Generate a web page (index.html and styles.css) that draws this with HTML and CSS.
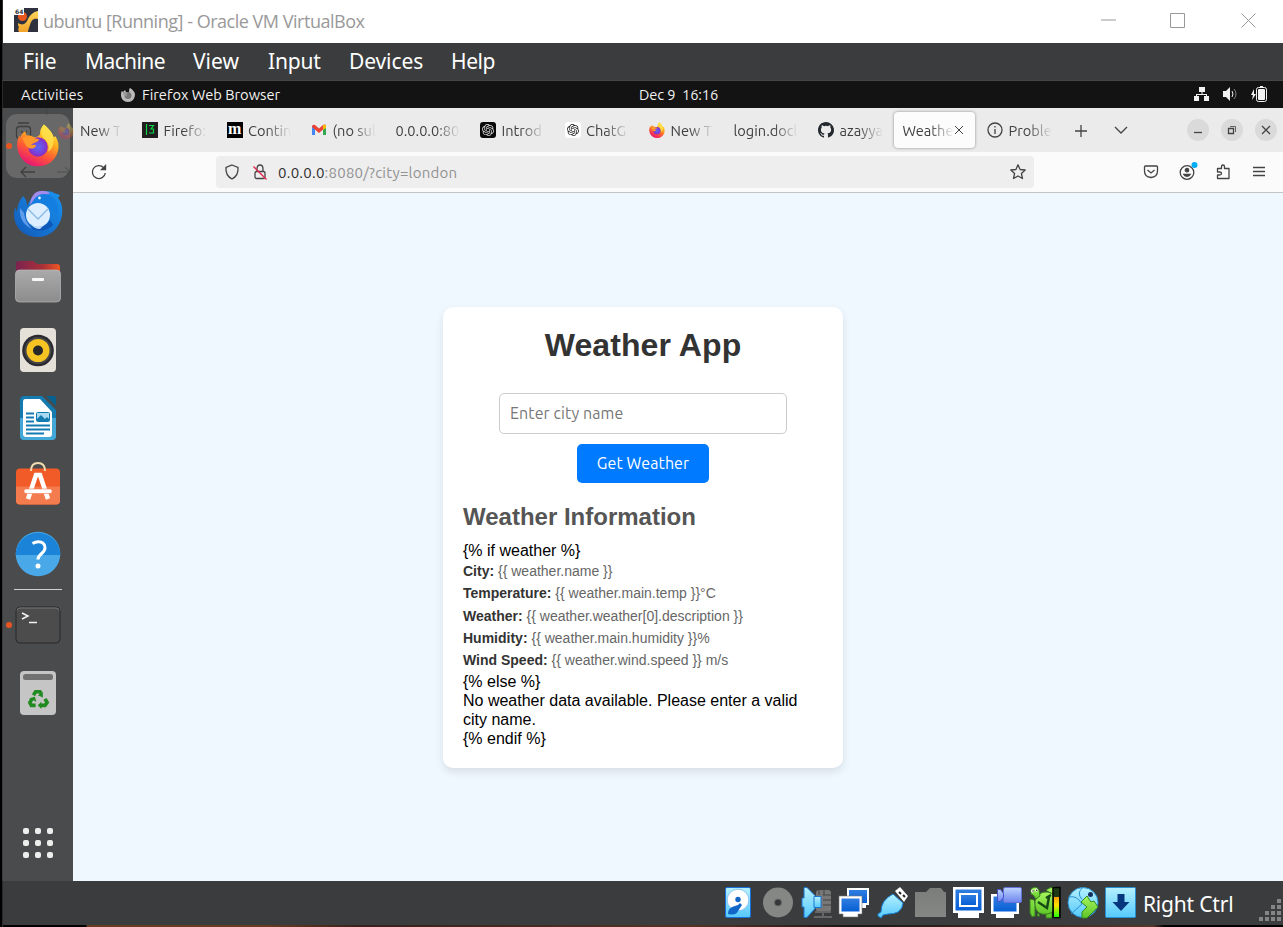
FILE: index.html
```html
<!DOCTYPE html>
<html lang="en">
<head>
<meta charset="utf-8">
<title>ubuntu [Running] - Oracle VM VirtualBox</title>
<link rel="stylesheet" href="styles.css">
</head>
<body>
<svg class="defs" width="0" height="0" aria-hidden="true">
  <defs>
    <linearGradient id="fox" x1="0.8" y1="0" x2="0.3" y2="1"><stop offset="0" stop-color="#fff44f"/><stop offset=".35" stop-color="#ffb01e"/><stop offset=".65" stop-color="#ff5a34"/><stop offset="1" stop-color="#e5107a"/></linearGradient>
    <radialGradient id="globe"><stop offset="0" stop-color="#5b6cf5"/><stop offset=".6" stop-color="#7546dd"/><stop offset="1" stop-color="#8c2bc0"/></radialGradient>
    <linearGradient id="bird" x1="1" y1="0" x2="0" y2="1"><stop offset="0" stop-color="#1a93f0"/><stop offset="1" stop-color="#1259b8"/></linearGradient>
    <linearGradient id="folder" x1="0" x2="1"><stop offset="0" stop-color="#7c2350"/><stop offset=".6" stop-color="#a83038"/><stop offset="1" stop-color="#ee5522"/></linearGradient>
    <linearGradient id="grey" x1="0" y1="0" x2="0" y2="1"><stop offset="0" stop-color="#aaa"/><stop offset="1" stop-color="#8c8c8c"/></linearGradient>
    <linearGradient id="cyan" x1="0" y1="0" x2="0" y2="1"><stop offset="0" stop-color="#b5f0ff"/><stop offset="1" stop-color="#55c9fb"/></linearGradient>
    <linearGradient id="blue" x1="0" y1="0" x2="0" y2="1"><stop offset="0" stop-color="#2f7de0"/><stop offset="1" stop-color="#075fd5"/></linearGradient>
    <linearGradient id="lilac" x1="0" y1="0" x2="0" y2="1"><stop offset="0" stop-color="#bcd4ff"/><stop offset="1" stop-color="#6d84ee"/></linearGradient>
    <linearGradient id="dim" x1="0" y1="0" x2="0" y2="1"><stop offset="0" stop-color="#7b7d7b"/><stop offset="1" stop-color="#858785"/></linearGradient>
    <linearGradient id="green" x1="0" y1="0" x2="0" y2="1"><stop offset="0" stop-color="#a5f75c"/><stop offset="1" stop-color="#5fc428"/></linearGradient>
    <linearGradient id="gold" x1="0" y1="0" x2="0" y2="1"><stop offset="0" stop-color="#ffd45a"/><stop offset="1" stop-color="#f3a32a"/></linearGradient>
    <linearGradient id="load" x1="0" y1="0" x2="0" y2="1"><stop offset="0" stop-color="#ff9d00"/><stop offset=".4" stop-color="#ffe000"/><stop offset="1" stop-color="#22ff00"/></linearGradient>
    <symbol id="firefox" viewBox="0 0 44 44">
      <path d="M28 1c6 5 9 9 10 13l2-1c3 5 3.600 10 2.500 15C40 38 32 44 22 44S3 37 1 26C0 21 1 16 3 12l1 3c0-3 3-6 5-7l1 4c4 0 6 1 8 2 3 0 5-1 6-3 0-4 1-7 4-10z" fill="url(#fox)"/>
      <circle cx="22" cy="24" r="10" fill="url(#globe)"/>
      <path d="M6 15c6-3 11 0 17 1-1 4-6 3-8 6 3 0 4-1 5 1-3 4-7 3-10 0-2-3-2-5-4-8z" fill="#ff982d"/>
      <path d="M28 1c-4 6-3 11 1 15s5 8 3 13c5-3 6-7 6-15-2-5-5-9-10-13z" fill="#ffe04b" opacity=".85"/>
    </symbol>
    <symbol id="knot" viewBox="0 0 24 24">
      <path fill="currentColor" d="M22.2819 9.8211a5.9847 5.9847 0 0 0-.5157-4.9108 6.0462 6.0462 0 0 0-6.5098-2.9A6.0651 6.0651 0 0 0 4.9807 4.1818a5.9847 5.9847 0 0 0-3.9977 2.9 6.0462 6.0462 0 0 0 .7427 7.0966 5.98 5.98 0 0 0 .511 4.9107 6.051 6.051 0 0 0 6.5146 2.9001A5.9847 5.9847 0 0 0 13.2599 24a6.0557 6.0557 0 0 0 5.7718-4.2058 5.9894 5.9894 0 0 0 3.9977-2.9001 6.0557 6.0557 0 0 0-.7475-7.0729zm-9.022 12.6081a4.4755 4.4755 0 0 1-2.8764-1.0408l.1419-.0804 4.7783-2.7582a.7948.7948 0 0 0 .3927-.6813v-6.7369l2.02 1.1686a.071.071 0 0 1 .038.052v5.5826a4.504 4.504 0 0 1-4.4945 4.4944zm-9.6607-4.1254a4.4708 4.4708 0 0 1-.5346-3.0137l.142.0852 4.783 2.7582a.7712.7712 0 0 0 .7806 0l5.8428-3.3685v2.3324a.0804.0804 0 0 1-.0332.0615L9.74 19.9502a4.4992 4.4992 0 0 1-6.1408-1.6464zM2.3408 7.8956a4.485 4.485 0 0 1 2.3655-1.9728V11.6a.7664.7664 0 0 0 .3879.6765l5.8144 3.3543-2.0201 1.1685a.0757.0757 0 0 1-.071 0l-4.8303-2.7865A4.504 4.504 0 0 1 2.3408 7.872zm16.5963 3.8558L13.1038 8.364 15.1192 7.2a.0757.0757 0 0 1 .071 0l4.8303 2.7913a4.4944 4.4944 0 0 1-.6765 8.1042v-5.6772a.79.79 0 0 0-.407-.667zm2.0107-3.0231l-.142-.0852-4.7735-2.7818a.7759.7759 0 0 0-.7854 0L9.409 9.2297V6.8974a.0662.0662 0 0 1 .0284-.0615l4.8303-2.7866a4.4992 4.4992 0 0 1 6.6802 4.66zM8.3065 12.863l-2.02-1.1638a.0804.0804 0 0 1-.038-.0567V6.0742a4.4992 4.4992 0 0 1 7.3757-3.4537l-.142.0805L8.704 5.459a.7948.7948 0 0 0-.3927.6813zm1.0976-2.3654l2.602-1.4998 2.6069 1.4998v2.9994l-2.5974 1.4997-2.6067-1.4997Z"/>
    </symbol>
  </defs>
</svg>
<div class="vm">
  <header class="titlebar">
    <svg class="vm-logo" viewBox="0 0 24 24">
      <path fill="#30333f" d="M0 0h24v24H0z"/><circle cx="8.500" cy="8.500" r="4.500" fill="#e9571c"/>
      <path d="M24 3v8c-5-1-7 2-8 6-1 3-2 5-2 7H5c-1-2-1-3 0-5-1-1-1-2-1-4 5 3 8 1 10-4 2-4 5-7 10-8z" fill="url(#gold)"/>
      <path fill="#fff" d="M0 0h10v7H0z"/><text x="1" y="5.800" class="tiny">64</text>
    </svg>
    <span class="window-title">ubuntu [Running] - Oracle VM VirtualBox</span>
    <svg class="window-buttons" viewBox="0 0 160 20"><path d="M0 10h15M140.500 3.500l14 14M154.500 3.500l-14 14" /><path d="M69.500 3.500h14v14h-14z"/></svg>
  </header>
  <nav class="menubar">
    <span class="m-file">File</span><span class="m-machine">Machine</span><span class="m-view">View</span><span class="m-input">Input</span><span class="m-devices">Devices</span><span class="m-help">Help</span>
  </nav>
  <div class="topbar">
    <span class="activities">Activities</span>
    <svg class="mini-fox" viewBox="0 0 16 16"><path d="M10 1c3 2 4 3 5 6 0 5-3 8-7 8s-7-3-7-7c0-2 0-3 1-4l1 1 2-2 1 2 2 1 1-1c0-2 0-3 1-4z" fill="#bbb"/><circle cx="8" cy="8.500" r="3.500" fill="#777"/><path d="M3 5c2 0 3 0 5 1-2 1-2 2-1 3-2 1-4-1-4-4z" fill="#999"/></svg>
    <span class="app-name">Firefox Web Browser</span>
    <span class="clock">Dec 9&nbsp; 16:16</span>
    <svg class="sys" viewBox="0 0 74 18">
      <g fill="#f2f2f2"><path d="M5 2h6v5H5zM0 11h5v5H0zM10 11h5v5h-5z"/><path d="M7.500 6h1v3H13v3h-1v-2H3v2H2V9h5.500zM29 6h3l4-4v14l-4-4h-3z"/><path d="M60 4l-3 6h2l-1 5 4-6h-2z"/><rect x="64" y="4" width="7" height="11" rx="1"/></g>
      <g fill="none" stroke="#f2f2f2"><rect x="62.500" y="2.500" width="10" height="14" rx="2"/><path d="M66 1.500h3M38 6q2 3 0 6"/><path d="M40 4q4 5 0 10" opacity=".5"/></g>
    </svg>
  </div>
  <div class="desktop">
    <aside class="dock">
      <div class="tile active running">
        <svg class="ghost" viewBox="0 0 70 84"><g fill="none" stroke="#3f3f3f" stroke-width="1.300"><rect x="13.500" y="18.500" width="14" height="12" rx="3"/><path d="M15 15h11M18 23l3 3 3-3M32 64H18m5-5-5 5 5 5"/><path d="M54 64h13m-5-5 5 5-5 5" opacity=".4"/><path d="M43.500 0v7" opacity=".4"/></g><use href="#firefox" x="55" y="15" width="16" height="16" opacity=".3"/></svg>
        <svg class="app"><use href="#firefox" x="2.500" y="1.500" width="43" height="43"/></svg>
      </div>
      <div class="tile"><svg class="app" viewBox="0 0 48 48">
        <path d="M9 6c3 3 4 6 4 10 3-7 7-12 13-14 5-2 12-1 14 1l6 2-2 3c4 5 5 11 4 17-2 12-11 22-24 22C9 47 0 37 0 24l1-7 2 5c0-6 2-11 6-16z" fill="url(#bird)"/>
        <path d="M21 3c-3 3-5 7-5 12l6-7c4-3 10-2 14-5-5-3-10-3-15 0z" fill="#a08bea"/>
        <path d="M21 8c-3 4-5 8-5 13l18-6 9 10c3-8-1-17-8-20-5-2-10-1-14 3z" fill="#137ee0"/>
        <path d="M12 34c5 6 19 5 24-4l3 5c-6 7-20 8-27-1z" fill="#0e57b8"/>
        <ellipse cx="24" cy="25" rx="12" ry="12" fill="#dceeff"/><path d="M14 19l10 10 10-10" fill="none" stroke="#86b9e6" stroke-width="1.300"/><path d="M17 34q5 4 12 2l-3 3q-6 0-9-5z" fill="#c0dcfa"/><path d="M6 18c-1 9 3 17 12 21-5-5-7-10-8-16z" fill="#5f9cec"/><circle cx="25.500" cy="8" r="1.400" fill="#d9f6ff"/>
      </svg></div>
      <div class="tile"><svg class="app" viewBox="0 0 48 48"><path d="M2 13V6q0-3 3-3h14l4 3h20q3 0 3 3v10H2z" fill="url(#folder)"/><rect x="1.500" y="12" width="45" height="32" rx="4" fill="url(#grey)" stroke="#b9b9b9" stroke-width=".7"/><rect x="18" y="20" width="12" height="3" rx="1" fill="#f7f7f7"/></svg></div>
      <div class="tile"><svg class="app" viewBox="0 0 48 48"><rect x="6" y="2" width="36" height="44" rx="4" fill="#e5e0d8"/><circle cx="24" cy="24.500" r="15.800" fill="#29292f"/><circle cx="24" cy="24.500" r="13.500" fill="#464648"/><circle cx="24" cy="24.500" r="11.500" fill="#f5c422"/><circle cx="24" cy="24.500" r="5" fill="#28282b"/></svg></div>
      <div class="tile"><svg class="app" viewBox="0 0 48 48"><path d="M10 2h18l14 14v26q0 4-4 4H10q-4 0-4-4V6q0-4 4-4z" fill="#147bb1"/><path d="M6 24h36v18q0 4-4 4H10q-4 0-4-4z" fill="#42a8d8"/><path d="M11 5h15l12 13v22q0 3-3 3H12q-3 0-3-3V8q0-3 2-3z" fill="#fff"/><path d="M32 2h8q2 0 2 2v8z" fill="#07618e"/><path d="M12 19.500h8M12 23.500h8M12 27.500h8M12 31.500h24M12 35.500h24M12 39.500h18" stroke="#147bb1" stroke-width="2"/><rect x="22.500" y="18.500" width="13" height="9" rx="1" fill="#aadaf3" stroke="#147bb1"/><path d="M23 27v-2l4-4 4 4 2-2 2 2v2z" fill="#147bb1"/></svg></div>
      <div class="tile"><svg class="app" viewBox="0 0 48 48"><rect x="2" y="6.500" width="44" height="36" rx="4" fill="#f15b27"/><path d="M2 24.500h44v14q0 4-4 4H6q-4 0-4-4z" fill="#f47b4d"/><path d="M17 9q0-8 7-8t7 8" fill="none" stroke="#efdcae" stroke-width="2"/><path d="M14 37l8-24h4l8 24" fill="none" stroke="#fff" stroke-width="4.500"/><rect x="10" y="27" width="28" height="4.500" rx="2" fill="#fff" stroke="#f47b4d" stroke-width=".6"/></svg></div>
      <div class="tile"><svg class="app" viewBox="0 0 48 48"><circle cx="24" cy="24" r="22.300" fill="#49a9e8"/><path d="M1.700 25a22.300 22.300 0 0 1 44.600 0z" fill="#1b84d9"/><path d="M18.500 13.500c6-3.500 12.500-1.500 12.500 4.500 0 5.500-7 5.500-7 11.500" fill="none" stroke="#fff" stroke-width="3"/><circle cx="24" cy="36" r="2.500" fill="#fff"/></svg></div>
      <hr>
      <div class="tile running"><svg class="app" viewBox="0 0 48 48"><rect x="2" y="6" width="44" height="36" rx="4" fill="#4c4c4c" stroke="#292929"/><path d="M3 9.500q0-2.500 3-2.500h36q3 0 3 2.500" fill="none" stroke="#777"/><path d="M8 12l6 3-6 3M15 21.500h8" fill="none" stroke="#f4f4f4" stroke-width="1.500"/></svg></div>
      <div class="tile"><svg class="app" viewBox="0 0 48 48"><rect x="6" y="2" width="36" height="44" rx="4" fill="#c5c5c5"/><rect x="9" y="5" width="30" height="6" rx="2.500" fill="#717171"/><g transform="translate(6.500 9) scale(.72)"><g fill="none" stroke="#218a21" stroke-width="5"><path d="M18 24l3-5h6l2 3M34 29l3 5-3 4h-6M21 38h-6l-2-4 3-5"/></g><path d="M31 27l-7-3 7-4zM29 33v10l-5-5zM12 28l8-2 2 7z" fill="#218a21"/></g></svg></div>
      <div class="apps-grid"><i></i><i></i><i></i><i></i><i></i><i></i><i></i><i></i><i></i></div>
    </aside>
    <section class="browser">
      <div class="tabs">
        <div class="tab first"><span>New T</span></div>
        <div class="tab"><svg viewBox="0 0 16 16"><path fill="#211d20" d="M0 0h16v16H0z"/><path d="M4.500 2v11M7 3.500h4.500L9 7h2.500v4H7" fill="none" stroke="#08d643" stroke-width="1.200"/></svg><span>Firefo:</span></div>
        <div class="tab"><svg viewBox="0 0 16 16"><path d="M0 0h16v16H0z"/><text x="1" y="12" class="m-logo">m</text></svg><span>Contin</span></div>
        <div class="tab"><svg viewBox="0 0 16 16"><path d="M1 13V4h3v9z" fill="#4285f4"/><path d="M12 13V4h3v9z" fill="#34a853"/><path d="M1 5l7 6 7-6V3q-1-1-3 0L8 6.500 4 3Q1 2 1 5z" fill="#ea4335"/><path d="M12 3q3-1 3 1v2l-3 2z" fill="#fbbc04"/></svg><span>(no sul</span></div>
        <div class="tab"><span>0.0.0.0:80</span></div>
        <div class="tab"><svg viewBox="0 0 16 16" color="#ddd"><rect width="16" height="16" rx="3" fill="#090909"/><use href="#knot" x="2" y="2" width="12" height="12"/></svg><span>Introd</span></div>
        <div class="tab"><svg viewBox="0 0 16 16" color="#222"><rect width="16" height="16" rx="3" fill="#fff"/><use href="#knot" x="2" y="2" width="12" height="12"/></svg><span>ChatG</span></div>
        <div class="tab"><svg><use href="#firefox" width="16" height="16"/></svg><span>New T</span></div>
        <div class="tab"><span>login.docl</span></div>
        <div class="tab"><svg viewBox="0 0 16 16"><path fill="#24292f" d="M8 0C3.580 0 0 3.580 0 8c0 3.540 2.290 6.530 5.470 7.590.4.070.55-.17.55-.38v-1.490c-2.230.48-2.700-.95-2.700-.95-.36-.92-.89-1.170-.89-1.170-.73-.5.050-.49.050-.49.81.060 1.230.83 1.230.83.72 1.230 1.880.87 2.340.67.070-.52.280-.87.510-1.070-1.780-.2-3.640-.89-3.640-3.950 0-.87.310-1.590.82-2.150-.08-.2-.36-1.020.08-2.120 0 0 .67-.21 2.200.82a7.600 7.600 0 0 1 4 0c1.530-1.040 2.200-.82 2.200-.82.44 1.100.16 1.920.08 2.120.51.56.82 1.270.82 2.150 0 3.070-1.870 3.750-3.650 3.950.29.25.54.73.54 1.480v2.190c0 .21.150.46.550.38A8 8 0 0 0 8 0z"/></svg><span>azayya</span></div>
        <div class="tab selected"><span>Weathe</span><svg class="close" viewBox="0 0 10 10"><path d="M1 1l8 8M9 1L1 9"/></svg></div>
        <div class="tab"><svg class="line" viewBox="0 0 16 16"><circle cx="8" cy="8" r="7"/><path d="M8 7v5M8 4v1.500"/></svg><span>Proble</span></div>
        <svg class="line plus" viewBox="0 0 12 12"><path d="M0 6h12M6 0v12"/></svg>
        <svg class="line chevron" viewBox="0 0 12 8"><path d="M0 1l6 6 6-6"/></svg>
        <div class="controls">
          <b><svg class="line" viewBox="0 0 22 22"><path d="M7 13.500h8"/></svg></b><b><svg class="line" viewBox="0 0 22 22"><path d="M7.500 9.500h5v5h-5z"/><path d="M9 7.500h5.500V13" stroke-width=".8"/></svg></b><b><svg class="line" viewBox="0 0 22 22"><path d="M7 7l8 8M15 7l-8 8"/></svg></b>
        </div>
      </div>
      <div class="toolbar">
        <svg class="line reload" viewBox="0 0 16 16"><path d="M14.300 9A6.500 6.500 0 1 1 12.500 3.500L14 5"/><path d="M14.500 1.500v4h-4z" fill="#444"/></svg>
        <div class="url">
          <svg class="line" viewBox="0 0 16 16"><path d="M8 1l6 2.500C14.500 9 12 13 8 15 4 13 1.500 9 2 3.500z"/></svg>
          <svg class="line lock" viewBox="0 0 16 16"><rect x="3" y="7.500" width="10" height="7" rx="1.500"/><path d="M5 7V5q0-4 3-4t3 4v2"/><path d="M1.500 2.500l13 13" stroke="#e22850"/></svg>
          <span class="address"><em>0.0.0.0</em>:8080/?city=london</span>
          <svg class="line star" viewBox="0 0 16 16"><path stroke-linejoin="round" d="M8 .8l2.100 4.700 5.100.5-3.800 3.500 1.100 5L8 12l-4.500 2.500 1.100-5L.8 6l5.100-.5z"/></svg>
        </div>
        <div class="tools">
          <svg class="line" viewBox="0 0 16 16"><path d="M2.500 2h11q1 0 1 1v4q0 6-6.500 6.500Q1.500 13 1.500 7V3q0-1 1-1zM4.500 6L8 9l3.500-3"/></svg>
          <svg class="line" viewBox="0 0 16 16"><circle cx="8" cy="8.500" r="6.800"/><circle cx="8" cy="6.200" r="1.700" fill="#444"/><path d="M4.700 10.300h6.600q-.8 2-3.300 2t-3.300-2z" fill="#444"/><circle cx="15.500" cy="1" r="3" fill="#00aef7" stroke="none"/></svg>
          <svg class="line" viewBox="0 0 16 16"><path stroke-linejoin="round" d="M2.500 14.500V11h2q2 0 2-1.500T4.500 8h-2V4.500h4V2.800Q6.500 1 8 1t1.500 1.800v1.700H14v10z"/></svg>
          <svg class="line" viewBox="0 0 16 16"><path d="M2 3.500h12M2 7.500h12M2 11.500h12"/></svg>
        </div>
      </div>
      <main class="page">
        <article class="card">
          <h1>Weather App</h1>
          <form><input type="text" placeholder="Enter city name"><button type="button">Get Weather</button></form>
          <h2>Weather Information</h2>
          <div>{% if weather %}</div>
          <p><strong>City:</strong> {{ weather.name }}</p>
          <p><strong>Temperature:</strong> {{ weather.main.temp }}°C</p>
          <p><strong>Weather:</strong> {{ weather.weather[0].description }}</p>
          <p><strong>Humidity:</strong> {{ weather.main.humidity }}%</p>
          <p class="last"><strong>Wind Speed:</strong> {{ weather.wind.speed }} m/s</p>
          <div>{% else %}</div>
          <div>No weather data available. Please enter a valid city name.</div>
          <div>{% endif %}</div>
        </article>
      </main>
    </section>
  </div>
  <footer class="statusbar">
    <svg viewBox="0 0 32 32"><rect x=".5" y=".5" width="25" height="30" rx="1.500" fill="url(#cyan)" stroke="#1870d8"/><circle cx="13" cy="13" r="10.800" fill="#fff" stroke="#5aa5ec" stroke-width=".6"/><path d="M3 27q0-5 4-7l6-2 2-2 2 2-4 6q-2 5-10 3z" fill="#1167c7"/><circle cx="13" cy="12.500" r="2.700" fill="#1167c7"/></svg>
    <svg viewBox="0 0 32 32"><circle cx="15" cy="15.500" r="15" fill="#858785"/><circle cx="15" cy="15.500" r="3.500" fill="#353637" stroke="#666"/></svg>
    <svg viewBox="0 0 32 32"><rect x="15" y="3" width="15" height="22" rx="3" fill="#777"/><path d="M14 25h16M22 26v4M13 30h18" stroke="#666" stroke-width="2"/><path d="M22 8h8M22 13h8M22 18h8M18 3v5M23 3v5" stroke="#444"/><path d="M3 .5h3l8 8v13l-8 9H3V20H1v-9h2z" fill="url(#cyan)" stroke="#1976d1"/><path d="M13 9.500h7v11h-7z" fill="url(#cyan)" stroke="#1976d1"/></svg>
    <svg viewBox="0 0 32 32"><path d="M8 1h22v17h-3v3H13v-3H8z" fill="#fff"/><path d="M10 3h18v13H10z" fill="url(#blue)"/><path d="M0 9h23v18h-4v3H4v-3H0z" fill="#fff" stroke="#777" stroke-width=".6"/><path d="M2.500 11.500h18v13h-18z" fill="url(#blue)"/></svg>
    <svg viewBox="0 0 32 32"><path d="M18 4l5-4 8 9-4 6z" fill="#fff"/><path d="M22 5l2 2M26 8l2 2" stroke="#222" stroke-width="2"/><path d="M16 7l10 9q0 5-5 9-4 2-10 2l-5 1-2 3-3-2v-2l3-2q0-12 12-18z" fill="url(#cyan)" stroke="#1780d7"/></svg>
    <svg viewBox="0 0 32 32"><path d="M0 5h11l4-4h11l3 4h2v25H0z" fill="url(#dim)"/></svg>
    <svg viewBox="0 0 32 32"><path d="M0 0h31v26h-5v5H5v-5H0z" fill="#fff"/><path d="M2.500 2.500h26v21h-26z" fill="url(#blue)"/><path d="M6 6h19v14H6z" fill="#fff"/><path d="M8 8h15v10H8z" fill="url(#blue)"/></svg>
    <svg viewBox="0 0 32 32"><path d="M0 7h28v20h-5v4H5v-4H0z" fill="#fff"/><path d="M2.500 9.500h23v15h-23z" fill="url(#blue)"/><rect x="12.500" y=".5" width="18" height="15" rx="1.500" fill="url(#lilac)" stroke="#6672d8"/><path d="M6.500 2.500h3l3 4v4l-3 4h-3z" fill="url(#lilac)" stroke="#4651c8"/></svg>
    <svg viewBox="0 0 32 32"><path d="M17 3q8-5 11-2l-2 7M5 13l-4-1v14l2 4 3-1V19M9 26l-1 3h3M17 26v5h6v-6" fill="url(#green)" stroke="#367d20"/><path d="M6 14q3-10 13-9 8 2 8 11t-8 11q-12 2-13-9z" fill="url(#green)" stroke="#367d20"/><path d="M2 2q5-4 8 1l1 6-4 3-3-4-2-1z" fill="url(#green)" stroke="#367d20"/><circle cx="3.500" cy="4" r="1.500" fill="#fff"/><circle cx="7.500" cy="3" r="1.500" fill="#fff"/><circle cx="4" cy="4" r=".7"/><circle cx="7.800" cy="3.300" r=".7"/><path d="M9 15l9 6 2-11M17 11l5-3" fill="none" stroke="#164c14" stroke-width="2.500"/><path d="M24 .5h7v30h-7z" fill="#1d3a16" stroke="#000" stroke-width="1.500"/><path d="M25 10h5v20h-5z" fill="url(#load)"/></svg>
    <svg viewBox="0 0 32 32"><circle cx="16" cy="15.500" r="15" fill="url(#cyan)" stroke="#2590d2"/><path d="M2 10q8-2 13 7L4 27M16 .5q-7 5-1 12" fill="none" stroke="#2590d2"/><circle cx="23.500" cy="7.500" r="2.500" fill="#16305e"/><path d="M14 15l6-6 4 6 3-1 4 6-11 11h-5v-6l5-5z" fill="url(#green)" stroke="#348c22"/></svg>
    <svg viewBox="0 0 32 32"><rect x=".5" y=".5" width="30" height="30" rx="1" fill="url(#cyan)" stroke="#268fd2"/><path d="M12.500 7h7v8h5l-8.500 9-8.500-9h5z" fill="#06377e"/></svg>
    <span class="host-key">Right Ctrl</span>
    <svg class="grip" viewBox="0 0 24 24"><path d="M19 0h4v4h-4zM13 6h4v4h-4zM19 6h4v4h-4zM7 12h4v4H7zM13 12h4v4h-4zM19 12h4v4h-4zM1 18h4v4H1zM7 18h4v4H7zM13 18h4v4h-4zM19 18h4v4h-4z" fill="#858585"/></svg>
  </footer>
  <div class="strip"></div>
</div>
</body>
</html>
```
FILE: styles.css
```css
* { box-sizing: border-box; }
body { margin: 0; background: #000; font-family: Ubuntu, "Noto Sans", sans-serif; }
svg { display: block; flex: none; overflow: visible; }
.defs { position: absolute; }
.vm { width: 1283px; height: 927px; display: flex; flex-direction: column; overflow: hidden; }
.vm > * { margin-left: 2px; border-left: 1px solid #2b2b2b; flex: none; }
.titlebar { height: 43px; background: #fff; display: flex; align-items: center; padding: 0 19px 3px 11px; color: #999; }
.vm-logo { width: 24px; height: 24px; }
.tiny { font: bold 6px "DejaVu Sans"; fill: #333; }
.window-title { font: 18px "Open Sans", sans-serif; margin-left: 5px; letter-spacing: -.48px; white-space: pre; padding-top: 2px; }
.window-buttons { width: 160px; height: 20px; margin-left: auto; margin-right: 3px; fill: none; stroke: #999; }
.menubar { height: 38px; background: #3b3c3e; border-bottom: 1px solid #454648; display: flex; align-items: center; padding: 0 0 1px 20px; color: #fff; font: 21px "Noto Sans", sans-serif; }
.menubar span { white-space: nowrap; }
.m-file { width: 62px; } .m-machine { width: 108px; letter-spacing: -.6px; } .m-view { width: 75px; } .m-input { width: 81px; letter-spacing: -.2px; } .m-devices { width: 102px; letter-spacing: -.1px; } .m-help { letter-spacing: -.4px; }
.topbar { height: 27px; background: #131313; color: #f2f2f2; display: flex; align-items: center; padding-left: 18px; font-size: 14.700px; }
.topbar span { white-space: nowrap; }
.activities { width: 99px; letter-spacing: .22px; }
.mini-fox { width: 16px; height: 16px; margin-right: 6px; }
.app-name { width: 497px; }
.clock { width: 555px; letter-spacing: -.1px; padding-bottom: 1px; }
.sys { width: 74px; height: 18px; margin-top: -1px; }
.desktop { height: 773px; display: flex; }
.vm > .desktop { border-left-color: #3b3b3b; }
.dock { width: 70px; background: #4a4b4c; display: flex; flex-direction: column; align-items: center; gap: 4px; padding-top: 6px; }
.tile { width: 64px; height: 64px; flex: none; display: grid; place-items: center; position: relative; }
.tile.active { background: #686868; border-radius: 11px; }
.tile.running::before { content: ""; position: absolute; left: 0; top: 29px; width: 6px; height: 6px; border-radius: 50%; background: #e95420; }
.app { width: 48px; height: 48px; position: relative; }
.ghost { position: absolute; left: -3px; top: -6px; width: 70px; height: 84px; }
.dock hr { width: 48px; height: 1px; border: 0; margin: -1px 0; background: #d0d0d0; flex: none; }
.apps-grid { display: grid; grid-template-columns: repeat(3, 6px); gap: 6px; margin-top: 99px; }
.apps-grid i { height: 6px; background: #eeeeec; border-radius: 2px; }
.browser { flex: 1; min-width: 0; display: flex; flex-direction: column; }
.tabs { height: 44px; background: #ebebeb; display: flex; align-items: center; color: #3f3f3f; font-size: 14.600px; }
.tab { width: 84.5px; height: 36px; flex: none; padding: 0 12px 0 8px; display: flex; align-items: center; gap: 5.500px; }
.tab.first { width: 61px; padding-left: 7px; }
.tab svg { width: 16px; height: 16px; }
.tab span { flex: 1; min-width: 0; padding-top: 1px; overflow: hidden; white-space: nowrap; mask-image: linear-gradient(to right, #000 calc(100% - 24px), transparent); }
.tab.first span { flex: none; width: 42px; }
.tab.selected { width: 81px; margin: 0 4.500px 0 -1px; background: #fcfcfc; border-radius: 4px; box-shadow: 0 0 3px #888; gap: 0; padding: 0 11px 0 9px; }
.tab.selected span { flex: none; width: 51px; }
.tab .close { width: 10px; height: 10px; stroke: #444; fill: none; }
.m-logo { font: bold 16px "Liberation Serif"; fill: #fff; }
.line { fill: none; stroke: #444; stroke-width: 1.300; }
.plus { width: 12px; height: 12px; margin: 1px 0 0 11px; }
.chevron { width: 12px; height: 8px; margin-left: 28px; }
.controls { display: flex; gap: 12px; margin-left: auto; padding-right: 6px; }
.controls b { width: 22px; height: 22px; border-radius: 50%; background: #dadada; }
.toolbar { height: 41px; background: #fbfbfb; border-bottom: 1px solid #c4c4c4; display: flex; align-items: center; padding-left: 18px; }
.reload { width: 16px; height: 16px; }
.url { margin-left: 109px; width: 818px; height: 32px; background: #eee; border-radius: 4px; display: flex; align-items: center; padding: 0 8px; color: #929292; }
.url svg { width: 16px; height: 16px; }
.url .lock { margin: 0 10px 0 12px; }
.address { font-size: 15px; letter-spacing: .24px; padding-top: 1px; }
.address em { font-style: normal; color: #303030; }
.star { margin-left: auto; }
.tools { display: flex; gap: 20px; margin-left: 109px; }
.tools svg { width: 16px; height: 16px; }
.page { flex: 1; background: #eff7ff; padding: 114px 70px 0 0; display: flex; justify-content: center; align-items: flex-start; }
.card { width: 400px; height: 461px; background: #fff; border-radius: 10px; padding: 20px; box-shadow: 0 4px 8px rgba(0,0,0,.1); color: #000; font: 16px/19px "Liberation Sans", Arial, sans-serif; }
.card h1 { margin: 0 0 29px; font-size: 32px; line-height: 37px; color: #333; text-align: center; letter-spacing: .1px; }
.card form { display: flex; flex-direction: column; align-items: center; gap: 10px; }
.card input { width: 288px; height: 41px; border: 1px solid #ccc; border-radius: 5px; padding: 0 10px 2px; font: 16px Ubuntu, "Noto Sans", sans-serif; letter-spacing: .1px; }
.card input::placeholder { color: #777; }
.card button { width: 132px; height: 39px; border: 0; border-radius: 5px; background: #007bff; color: #fff; font: 16px Ubuntu, "Noto Sans", sans-serif; padding: 0 0 2px; letter-spacing: .1px; white-space: nowrap; }
.card h2 { margin: 20px 0 10px; font-size: 24px; line-height: 28px; color: #555; }
.card p { margin: 0; font-size: 14px; line-height: 22.300px; color: #666; }
.card p strong { color: #333; }
.card .last { margin-bottom: .5px; }
.card div { line-height: 19px; }
.statusbar { height: 44px; background: #3b3c3d; display: flex; align-items: center; gap: 6px; padding: 0 0 0 722px; color: #fff; }
.statusbar svg { width: 32px; height: 32px; }
.host-key { font: 21px "Noto Sans", sans-serif; width: 109px; white-space: nowrap; letter-spacing: -.2px; padding-top: 2px; }
.statusbar .grip { width: 24px; height: 24px; margin-top: 15px; }
.strip { height: 2px; background: linear-gradient(to right, #000 83px, #6a3b22 84px, #6a3b22 260px, #37211b 360px, #543326 690px, #1c1615 850px, #54372a 1150px, #000 1162px); }
```
